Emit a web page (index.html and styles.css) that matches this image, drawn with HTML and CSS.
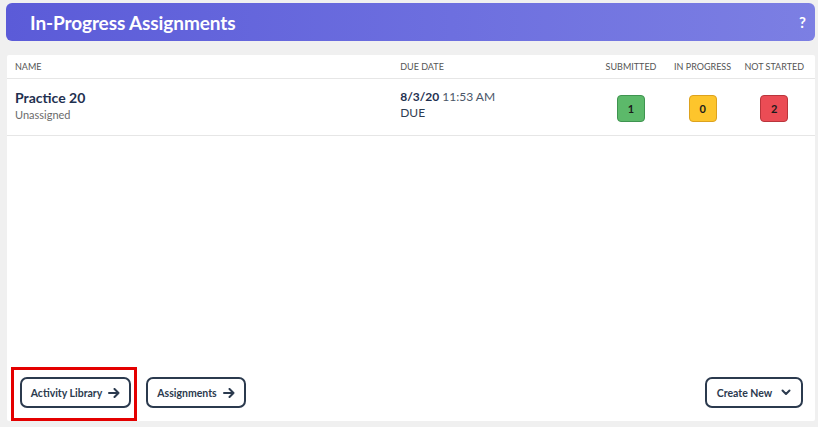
FILE: index.html
```html
<!DOCTYPE html>
<html>
<head>
<meta charset="utf-8">
<link rel="stylesheet" href="styles.css">
</head>
<body>
<div class="page">
  <div class="topbar">
    <span class="title">In-Progress Assignments</span>
    <span class="help">?</span>
  </div>
  <div class="card">
    <div class="thead">
      <div class="c-name">NAME</div>
      <div class="c-due">DUE DATE</div>
      <div class="c-stat">SUBMITTED</div>
      <div class="c-stat">IN PROGRESS</div>
      <div class="c-stat">NOT STARTED</div>
    </div>
    <div class="trow">
      <div class="c-name">
        <div class="aname">Practice 20</div>
        <div class="asub">Unassigned</div>
      </div>
      <div class="c-due">
        <div class="dline"><b>8/3/20</b> 11:53 AM</div>
        <div class="dsub">DUE</div>
      </div>
      <div class="c-stat"><span class="badge green">1</span></div>
      <div class="c-stat"><span class="badge yellow">0</span></div>
      <div class="c-stat"><span class="badge red">2</span></div>
    </div>
    <div class="spacer"></div>
    <div class="footer">
      <div class="hl-wrap">
        <button class="btn b-lib">Activity Library
          <svg class="arr" width="12" height="10" viewBox="0 0 12 10"><path d="M1 5 H10.5 M6.5 1 L10.5 5 L6.5 9" fill="none" stroke="#2b3a4e" stroke-width="2" stroke-linecap="round" stroke-linejoin="round"/></svg>
        </button>
        <div class="highlight"></div>
      </div>
      <button class="btn b-asg">Assignments
        <svg class="arr" width="12" height="10" viewBox="0 0 12 10"><path d="M1 5 H10.5 M6.5 1 L10.5 5 L6.5 9" fill="none" stroke="#2b3a4e" stroke-width="2" stroke-linecap="round" stroke-linejoin="round"/></svg>
      </button>
      <div class="grow"></div>
      <button class="btn b-new">Create New
        <svg class="chev" width="10" height="7" viewBox="0 0 10 7"><path d="M1.5 1.5 L5 5 L8.5 1.5" fill="none" stroke="#2b3a4e" stroke-width="2" stroke-linecap="round" stroke-linejoin="round"/></svg>
      </button>
    </div>
  </div>
</div>
</body>
</html>
```
FILE: styles.css
```css
* { box-sizing: border-box; }
html, body { margin: 0; padding: 0; }
body {
  background: #f0f0f0;
  font-family: "Lato", "Noto Sans", sans-serif;
  width: 818px;
  height: 427px;
  overflow: hidden;
}
.page {
  padding: 3px 3px 0 6px;
}
.topbar {
  height: 38px;
  border-radius: 6px;
  background: linear-gradient(90deg, #5b5bd8 0%, #6d6fdf 55%, #7c7fe3 100%);
  display: flex;
  align-items: center;
  justify-content: space-between;
  padding: 0 9px 0 24px;
  color: #fff;
  font-weight: 700;
}
.title { font-size: 19px; letter-spacing: -0.1px; }
.help { font-size: 15px; }
.card {
  margin: 14px 0 0 1px;
  height: 366px;
  background: #fff;
  display: flex;
  flex-direction: column;
  border-radius: 2px;
}
.thead, .trow {
  display: flex;
  padding: 0 5px 0 8px;
  border-bottom: 1px solid #e6e6e6;
}
.thead {
  height: 24px;
  align-items: center;
  font-size: 9px;
  color: #555;
  letter-spacing: 0;
}
.trow {
  height: 57px;
  padding-top: 10px;
  align-items: flex-start;
}
.c-name { flex: 1; }
.c-due { width: 195px; }
.c-stat { width: 71.6px; text-align: center; white-space: nowrap; }
.aname { font-size: 14px; font-weight: 700; color: #1f3150; line-height: 18px; }
.asub { font-size: 11px; color: #6b6b6b; line-height: 15px; }
.dline { font-size: 12px; color: #4a5668; line-height: 16px; }
.dline b { color: #1f3150; }
.dsub { font-size: 12px; color: #2f3d52; line-height: 15px; }
.badge {
  display: inline-flex;
  align-items: center;
  justify-content: center;
  width: 28px;
  height: 27px;
  margin-top: 6px;
  border-radius: 4px;
  font-size: 11px;
  font-weight: 700;
  color: #1b1b1b;
}
.green { background: #5cb96a; border: 1px solid #3f9450; }
.yellow { background: #fdc52c; border: 1px solid #dda21e; }
.red { background: #eb4c55; border: 1px solid #b9353c; }
.spacer { flex: 1; }
.footer {
  display: flex;
  align-items: center;
  padding: 0 12px 13px 13px;
  gap: 15px;
}
.grow { flex: 1; }
.btn {
  height: 31px;
  border: 2px solid #2b3a4e;
  border-radius: 7px;
  background: #fff;
  color: #2b3a4e;
  font-family: inherit;
  font-size: 10.5px;
  font-weight: 700;
  padding: 0;
  display: inline-flex;
  align-items: center;
  justify-content: center;
  gap: 6px;
  white-space: nowrap;
}
.b-lib { width: 111px; }
.b-asg { width: 100px; }
.b-new { width: 98px; gap: 9px; }
.hl-wrap { position: relative; display: flex; }
.highlight {
  position: absolute;
  left: -9px;
  top: -10px;
  right: -6px;
  bottom: -13px;
  border: 3px solid #e40000;
  pointer-events: none;
}
```
